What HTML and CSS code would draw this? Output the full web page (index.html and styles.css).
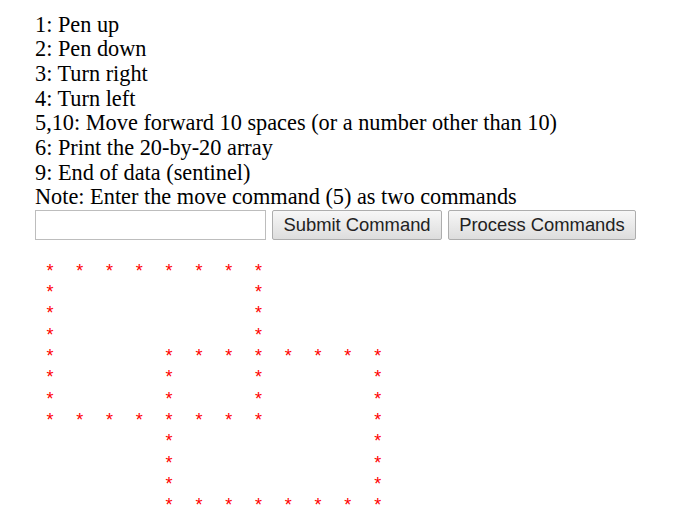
FILE: index.html
```html
<!DOCTYPE html>
<html lang="en">

<head>
    <meta charset="UTF-8">
    <meta name="viewport" content="width=device-width, initial-scale=1.0">
    <title>Turtle Graphics</title>
    <link rel="stylesheet" href="styles.css">
</head>

<body>

    <div class="commands">
        <div>1: Pen up</div>
        <div>2: Pen down</div>
        <div>3: Turn right</div>
        <div>4: Turn left</div>
        <div>5,10: Move forward 10 spaces (or a number other than 10)</div>
        <div>6: Print the 20-by-20 array</div>
        <div>9: End of data (sentinel)</div>
        <div>Note: Enter the move command (5) as two commands</div>
    </div>
    <div class="controls">
        <input type="text" id="command">
        <button class="submit" id="submit">Submit Command</button>
        <button class="process" id="process">Process Commands</button>
    </div>
    <div class="floor" id="floor"></div>

    <script>
        var SIZE = 20;
        var floor = [];
        for (var r = 0; r < SIZE; r++) {
            floor.push([]);
            for (var c = 0; c < SIZE; c++) {
                floor[r].push(0);
            }
        }
        // [row, col, dRow, dCol, length]
        var lines = [
            [0, 0, 0, 1, 8],
            [0, 7, 1, 0, 8],
            [7, 7, 0, -1, 8],
            [7, 0, -1, 0, 8],
            [4, 4, 0, 1, 8],
            [4, 11, 1, 0, 8],
            [11, 11, 0, -1, 8],
            [11, 4, -1, 0, 8]
        ];
        for (var i = 0; i < lines.length; i++) {
            var l = lines[i];
            for (var k = 0; k < l[4]; k++) {
                floor[l[0] + l[2] * k][l[1] + l[3] * k] = 1;
            }
        }
        var out = document.getElementById("floor");
        for (var r = 0; r < SIZE; r++) {
            for (var c = 0; c < SIZE; c++) {
                var cell = document.createElement("span");
                cell.className = "cell";
                cell.textContent = floor[r][c] ? "*" : "";
                out.appendChild(cell);
            }
        }
    </script>
</body>

</html>
```

FILE: styles.css
```css
body {
    margin: 0;
    padding: 12.5px 0 0 35px;
    font-family: "Liberation Serif", "Times New Roman", serif;
    font-size: 22.3px;
    line-height: 24.7px;
    color: #000;
}

.controls {
    display: flex;
    gap: 6px;
    height: 30px;
    line-height: normal;
}

.controls input {
    width: 231px;
    height: 30px;
    box-sizing: border-box;
    border: 1px solid #bdbdbd;
    margin: 0;
    padding: 2px 4px;
    font-size: 18px;
}

.controls button {
    height: 30px;
    margin: 0;
    padding: 0;
    border: 1px solid #adadad;
    border-radius: 2px;
    background: linear-gradient(#f7f7f7, #dddddd);
    font-family: "Liberation Sans", Arial, sans-serif;
    font-size: 18.4px;
    color: #222;
}

.controls .submit {
    width: 170px;
}

.controls .process {
    width: 188px;
}

.floor {
    display: grid;
    grid-template-columns: repeat(20, 29.8px);
    grid-auto-rows: 21.33px;
    margin-top: 20.5px;
    color: #ff0000;
    font-family: "Liberation Sans", Arial, sans-serif;
    font-size: 18px;
    line-height: 21.33px;
}

.cell {
    text-align: center;
}
```
